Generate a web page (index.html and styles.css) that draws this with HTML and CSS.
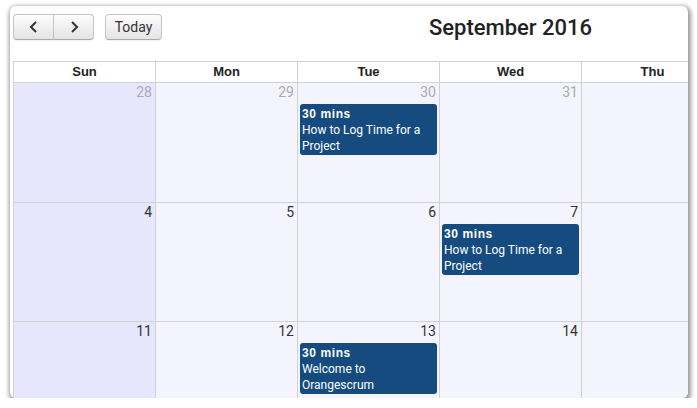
FILE: index.html
```html
<!DOCTYPE html>
<html lang="en">
<head>
    <meta charset="UTF-8">
    <meta name="viewport" content="width=device-width, initial-scale=1.0">
    <title>Calendar</title>
    <link rel="stylesheet" href="styles.css">
</head>
<body>
    <div class="panel">
        <div class="calendar">
            <div class="toolbar">
                <div class="left">
                    <div class="btn-group">
                        <button class="btn nav-btn" type="button">
                            <svg width="10" height="12" viewBox="0 0 10 12"><polyline points="7,1 2,6 7,11" fill="none" stroke="#333" stroke-width="2"/></svg>
                        </button>
                        <button class="btn nav-btn" type="button">
                            <svg width="10" height="12" viewBox="0 0 10 12"><polyline points="3,1 8,6 3,11" fill="none" stroke="#333" stroke-width="2"/></svg>
                        </button>
                    </div>
                    <button class="btn today" type="button">Today</button>
                </div>
                <h2 class="title">September 2016</h2>
                <div></div>
            </div>

            <div class="grid">
                <div class="head">Sun</div>
                <div class="head">Mon</div>
                <div class="head">Tue</div>
                <div class="head">Wed</div>
                <div class="head">Thu</div>
                <div class="head">Fri</div>
                <div class="head">Sat</div>

                <div class="day sun other"><div class="num">28</div></div>
                <div class="day other"><div class="num">29</div></div>
                <div class="day other"><div class="num">30</div>
                    <div class="event"><strong>30 mins</strong><span>How to Log Time for a Project</span></div>
                </div>
                <div class="day other"><div class="num">31</div></div>
                <div class="day"><div class="num">1</div></div>
                <div class="day"><div class="num">2</div></div>
                <div class="day"><div class="num">3</div></div>

                <div class="day sun"><div class="num">4</div></div>
                <div class="day"><div class="num">5</div></div>
                <div class="day"><div class="num">6</div></div>
                <div class="day"><div class="num">7</div>
                    <div class="event"><strong>30 mins</strong><span>How to Log Time for a Project</span></div>
                </div>
                <div class="day"><div class="num">8</div></div>
                <div class="day"><div class="num">9</div></div>
                <div class="day"><div class="num">10</div></div>

                <div class="day sun"><div class="num">11</div></div>
                <div class="day"><div class="num">12</div></div>
                <div class="day"><div class="num">13</div>
                    <div class="event"><strong>30 mins</strong><span>Welcome to Orangescrum</span></div>
                </div>
                <div class="day"><div class="num">14</div></div>
                <div class="day"><div class="num">15</div></div>
                <div class="day"><div class="num">16</div></div>
                <div class="day"><div class="num">17</div></div>
            </div>
        </div>
    </div>
</body>
</html>
```

FILE: styles.css
```css
body {
    margin: 0;
    background: #fff;
    font-family: Roboto, "Liberation Sans", Arial, sans-serif;
}
.panel {
    margin: 6px 0 0 10px;
    width: 678px;
    height: 392px;
    background: #fff;
    border-radius: 6px;
    box-shadow: 1px 2px 4px 2px rgba(0, 0, 0, 0.4);
    overflow: hidden;
}
.calendar {
    width: 995px;
    padding: 8px 0 0 3px;
}
.toolbar {
    display: grid;
    grid-template-columns: 1fr auto 1fr;
    height: 47px;
}
.left {
    display: flex;
    align-items: flex-start;
    gap: 11px;
}
.btn-group {
    display: flex;
}
.btn {
    height: 26px;
    background: linear-gradient(#fdfdfd, #e4e4e4);
    border: 1px solid #c4c4c4;
    border-bottom-color: #aaa;
    border-radius: 4px;
    box-shadow: inset 0 1px 0 rgba(255, 255, 255, 0.6), 0 1px 1px rgba(0, 0, 0, 0.06);
    color: #333;
    font-family: Roboto, "Liberation Sans", sans-serif;
    font-size: 14px;
    padding: 0;
    display: flex;
    align-items: center;
    justify-content: center;
}
.nav-btn {
    width: 41px;
}
.btn-group .nav-btn:first-child {
    border-radius: 4px 0 0 4px;
}
.btn-group .nav-btn:last-child {
    border-radius: 0 4px 4px 0;
    margin-left: -1px;
}
.today {
    width: 57px;
}
.title {
    margin: 0;
    font-size: 22px;
    font-weight: 500;
    color: #222;
    line-height: 28px;
}
.grid {
    display: grid;
    grid-template-columns: repeat(7, 142px);
    grid-template-rows: 21px 120px 119px 119px;
    border-top: 1px solid #d2d2d2;
    border-left: 1px solid #d2d2d2;
}
.head {
    background: #fff;
    border-right: 1px solid #d2d2d2;
    border-bottom: 1px solid #d2d2d2;
    font-family: "Liberation Sans", Arial, sans-serif;
    font-weight: bold;
    font-size: 13px;
    color: #222;
    text-align: center;
    line-height: 20px;
}
.day {
    background: #f4f4ff;
    border-right: 1px solid #d2d2d2;
    border-bottom: 1px solid #d2d2d2;
}
.day.sun {
    background: #e6e6fd;
}
.num {
    text-align: right;
    padding: 0 3px 0 0;
    font-size: 14px;
    line-height: 18px;
    color: #333;
}
.other .num {
    color: #aaa;
}
.event {
    margin: 3px 2px 0 2px;
    padding: 2px 2px 1px;
    background: #154b7e;
    border-radius: 3px;
    color: #fff;
    font-size: 12px;
    line-height: 16px;
}
.event strong {
    display: block;
    font-family: "Liberation Sans", Arial, sans-serif;
    font-weight: bold;
    letter-spacing: 0.6px;
}
.event span {
    display: block;
}
```
